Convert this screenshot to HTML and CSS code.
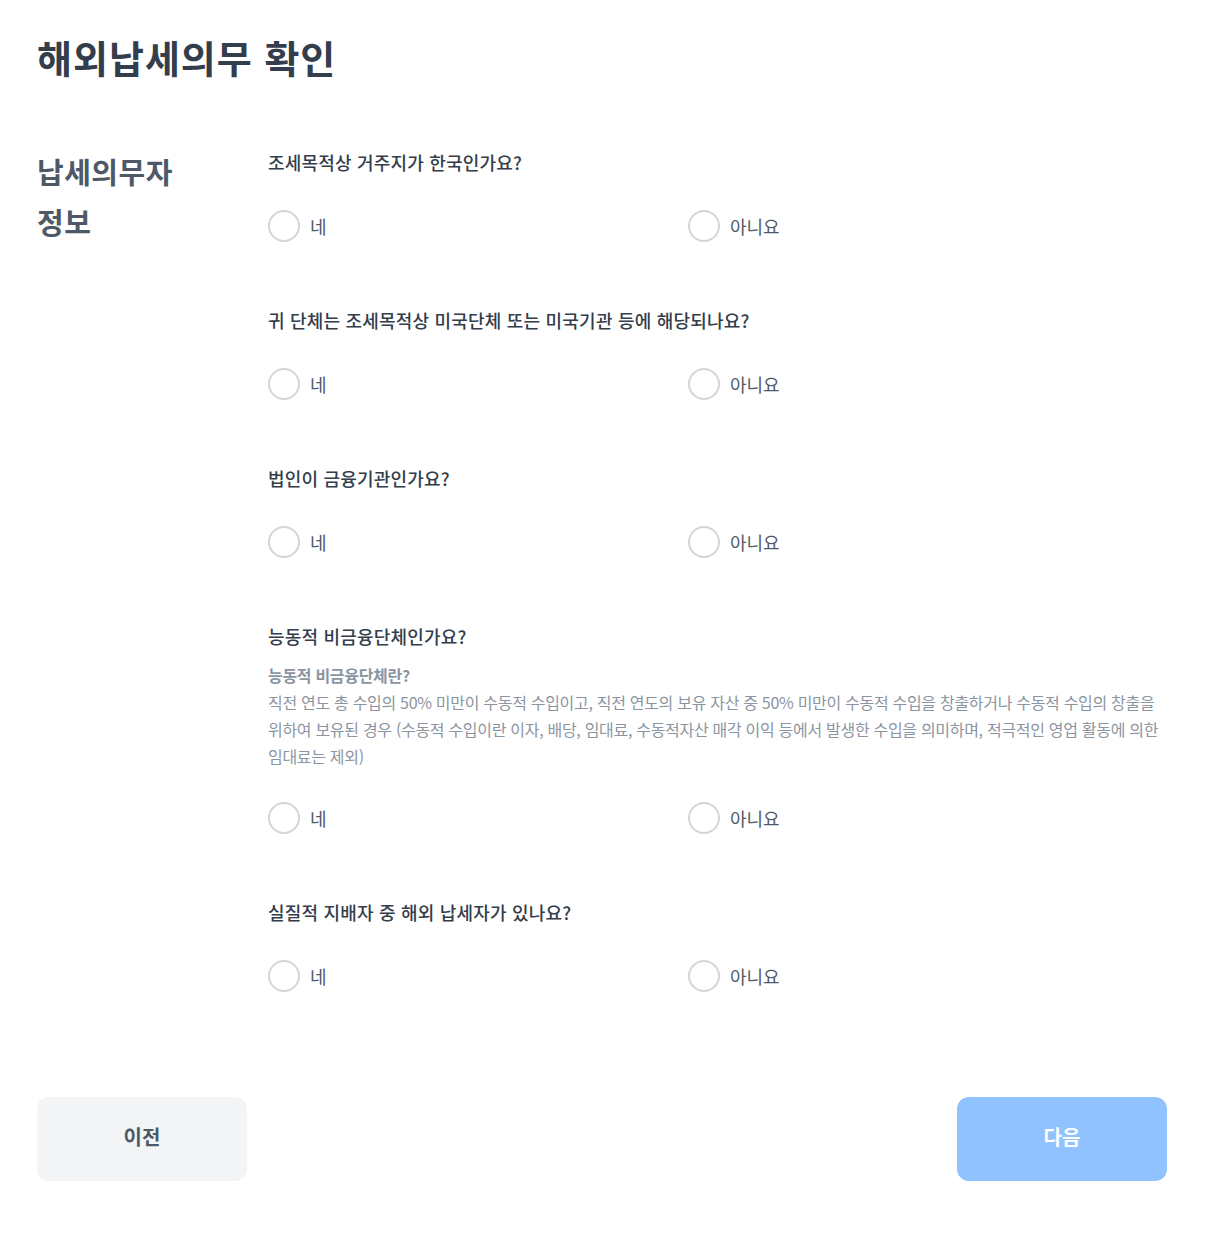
FILE: index.html
```html
<!DOCTYPE html>
<html lang="ko">
<head>
    <meta charset="UTF-8">
    <meta name="viewport" content="width=device-width, initial-scale=1.0">
    <title>해외납세의무 확인</title>
    <link rel="stylesheet" href="styles.css">
</head>
<body>
    <div class="page">
        <h1 class="page-title">해외납세의무 확인</h1>

        <section class="form-section">
            <h2 class="section-title">납세의무자<br>정보</h2>

            <div class="questions">
                <div class="question">
                    <p class="question-title">조세목적상 거주지가 한국인가요?</p>
                    <div class="options">
                        <label class="option"><span class="radio"></span>네</label>
                        <label class="option"><span class="radio"></span>아니요</label>
                    </div>
                </div>

                <div class="question">
                    <p class="question-title">귀 단체는 조세목적상 미국단체 또는 미국기관 등에 해당되나요?</p>
                    <div class="options">
                        <label class="option"><span class="radio"></span>네</label>
                        <label class="option"><span class="radio"></span>아니요</label>
                    </div>
                </div>

                <div class="question">
                    <p class="question-title">법인이 금융기관인가요?</p>
                    <div class="options">
                        <label class="option"><span class="radio"></span>네</label>
                        <label class="option"><span class="radio"></span>아니요</label>
                    </div>
                </div>

                <div class="question">
                    <p class="question-title">능동적 비금융단체인가요?</p>
                    <div class="desc">
                        <strong>능동적 비금융단체란?</strong>
                        <p>직전 연도 총 수입의 50% 미만이 수동적 수입이고, 직전 연도의 보유 자산 중 50% 미만이 수동적 수입을 창출하거나 수동적 수입의 창출을 위하여 보유된 경우 (수동적 수입이란 이자, 배당, 임대료, 수동적자산 매각 이익 등에서 발생한 수입을 의미하며, 적극적인 영업 활동에 의한 임대료는 제외)</p>
                    </div>
                    <div class="options">
                        <label class="option"><span class="radio"></span>네</label>
                        <label class="option"><span class="radio"></span>아니요</label>
                    </div>
                </div>

                <div class="question">
                    <p class="question-title">실질적 지배자 중 해외 납세자가 있나요?</p>
                    <div class="options">
                        <label class="option"><span class="radio"></span>네</label>
                        <label class="option"><span class="radio"></span>아니요</label>
                    </div>
                </div>
            </div>
        </section>

        <div class="actions">
            <button class="btn btn-prev">이전</button>
            <button class="btn btn-next">다음</button>
        </div>
    </div>
</body>
</html>
```

FILE: styles.css
```css
body {
    margin: 0;
    padding: 0;
    background: #fff;
    font-family: "Noto Sans CJK KR", "Noto Sans", sans-serif;
    color: #333d4b;
}

.page {
    width: 1130px;
    padding: 32px 0 0 37px;
}

.page-title {
    margin: 0;
    font-size: 38px;
    line-height: 50px;
    font-weight: 700;
    letter-spacing: 1px;
    color: #333d4b;
}

.form-section {
    display: grid;
    grid-template-columns: 231px 1fr;
    margin-top: 64px;
}

.section-title {
    margin: 0;
    font-size: 29px;
    line-height: 50px;
    font-weight: 700;
    letter-spacing: 0.5px;
    color: #4e5968;
}

.question {
    margin-top: 3px;
    margin-bottom: 65px;
}

.question:last-child {
    margin-bottom: 0;
}

.question-title {
    margin: 0;
    font-size: 18px;
    line-height: 26px;
    font-weight: 500;
    letter-spacing: 0.2px;
    color: #333d4b;
}

.desc {
    margin: 13px 0 -3px;
    font-size: 16px;
    line-height: 27px;
    letter-spacing: -0.3px;
    word-break: keep-all;
    color: #8b95a1;
}

.desc strong {
    display: block;
    font-weight: 700;
}

.desc p {
    margin: 0;
}

.options {
    display: grid;
    grid-template-columns: 420px 420px;
    margin-top: 35px;
}

.option {
    display: flex;
    align-items: center;
    gap: 10px;
    height: 32px;
    font-size: 18px;
    color: #4e5968;
    cursor: pointer;
}

.radio {
    box-sizing: border-box;
    width: 32px;
    height: 32px;
    border: 2px solid #d1d6db;
    border-radius: 50%;
    background: #fff;
}

.actions {
    display: flex;
    justify-content: space-between;
    margin-top: 105px;
}

.btn {
    width: 210px;
    height: 84px;
    padding: 0 0 5px;
    border: none;
    border-radius: 12px;
    font-family: inherit;
    font-size: 20px;
    font-weight: 700;
    cursor: pointer;
}

.btn-prev {
    background: #f2f4f6;
    color: #4e5968;
}

.btn-next {
    background: #90c2ff;
    color: #fff;
}
```
